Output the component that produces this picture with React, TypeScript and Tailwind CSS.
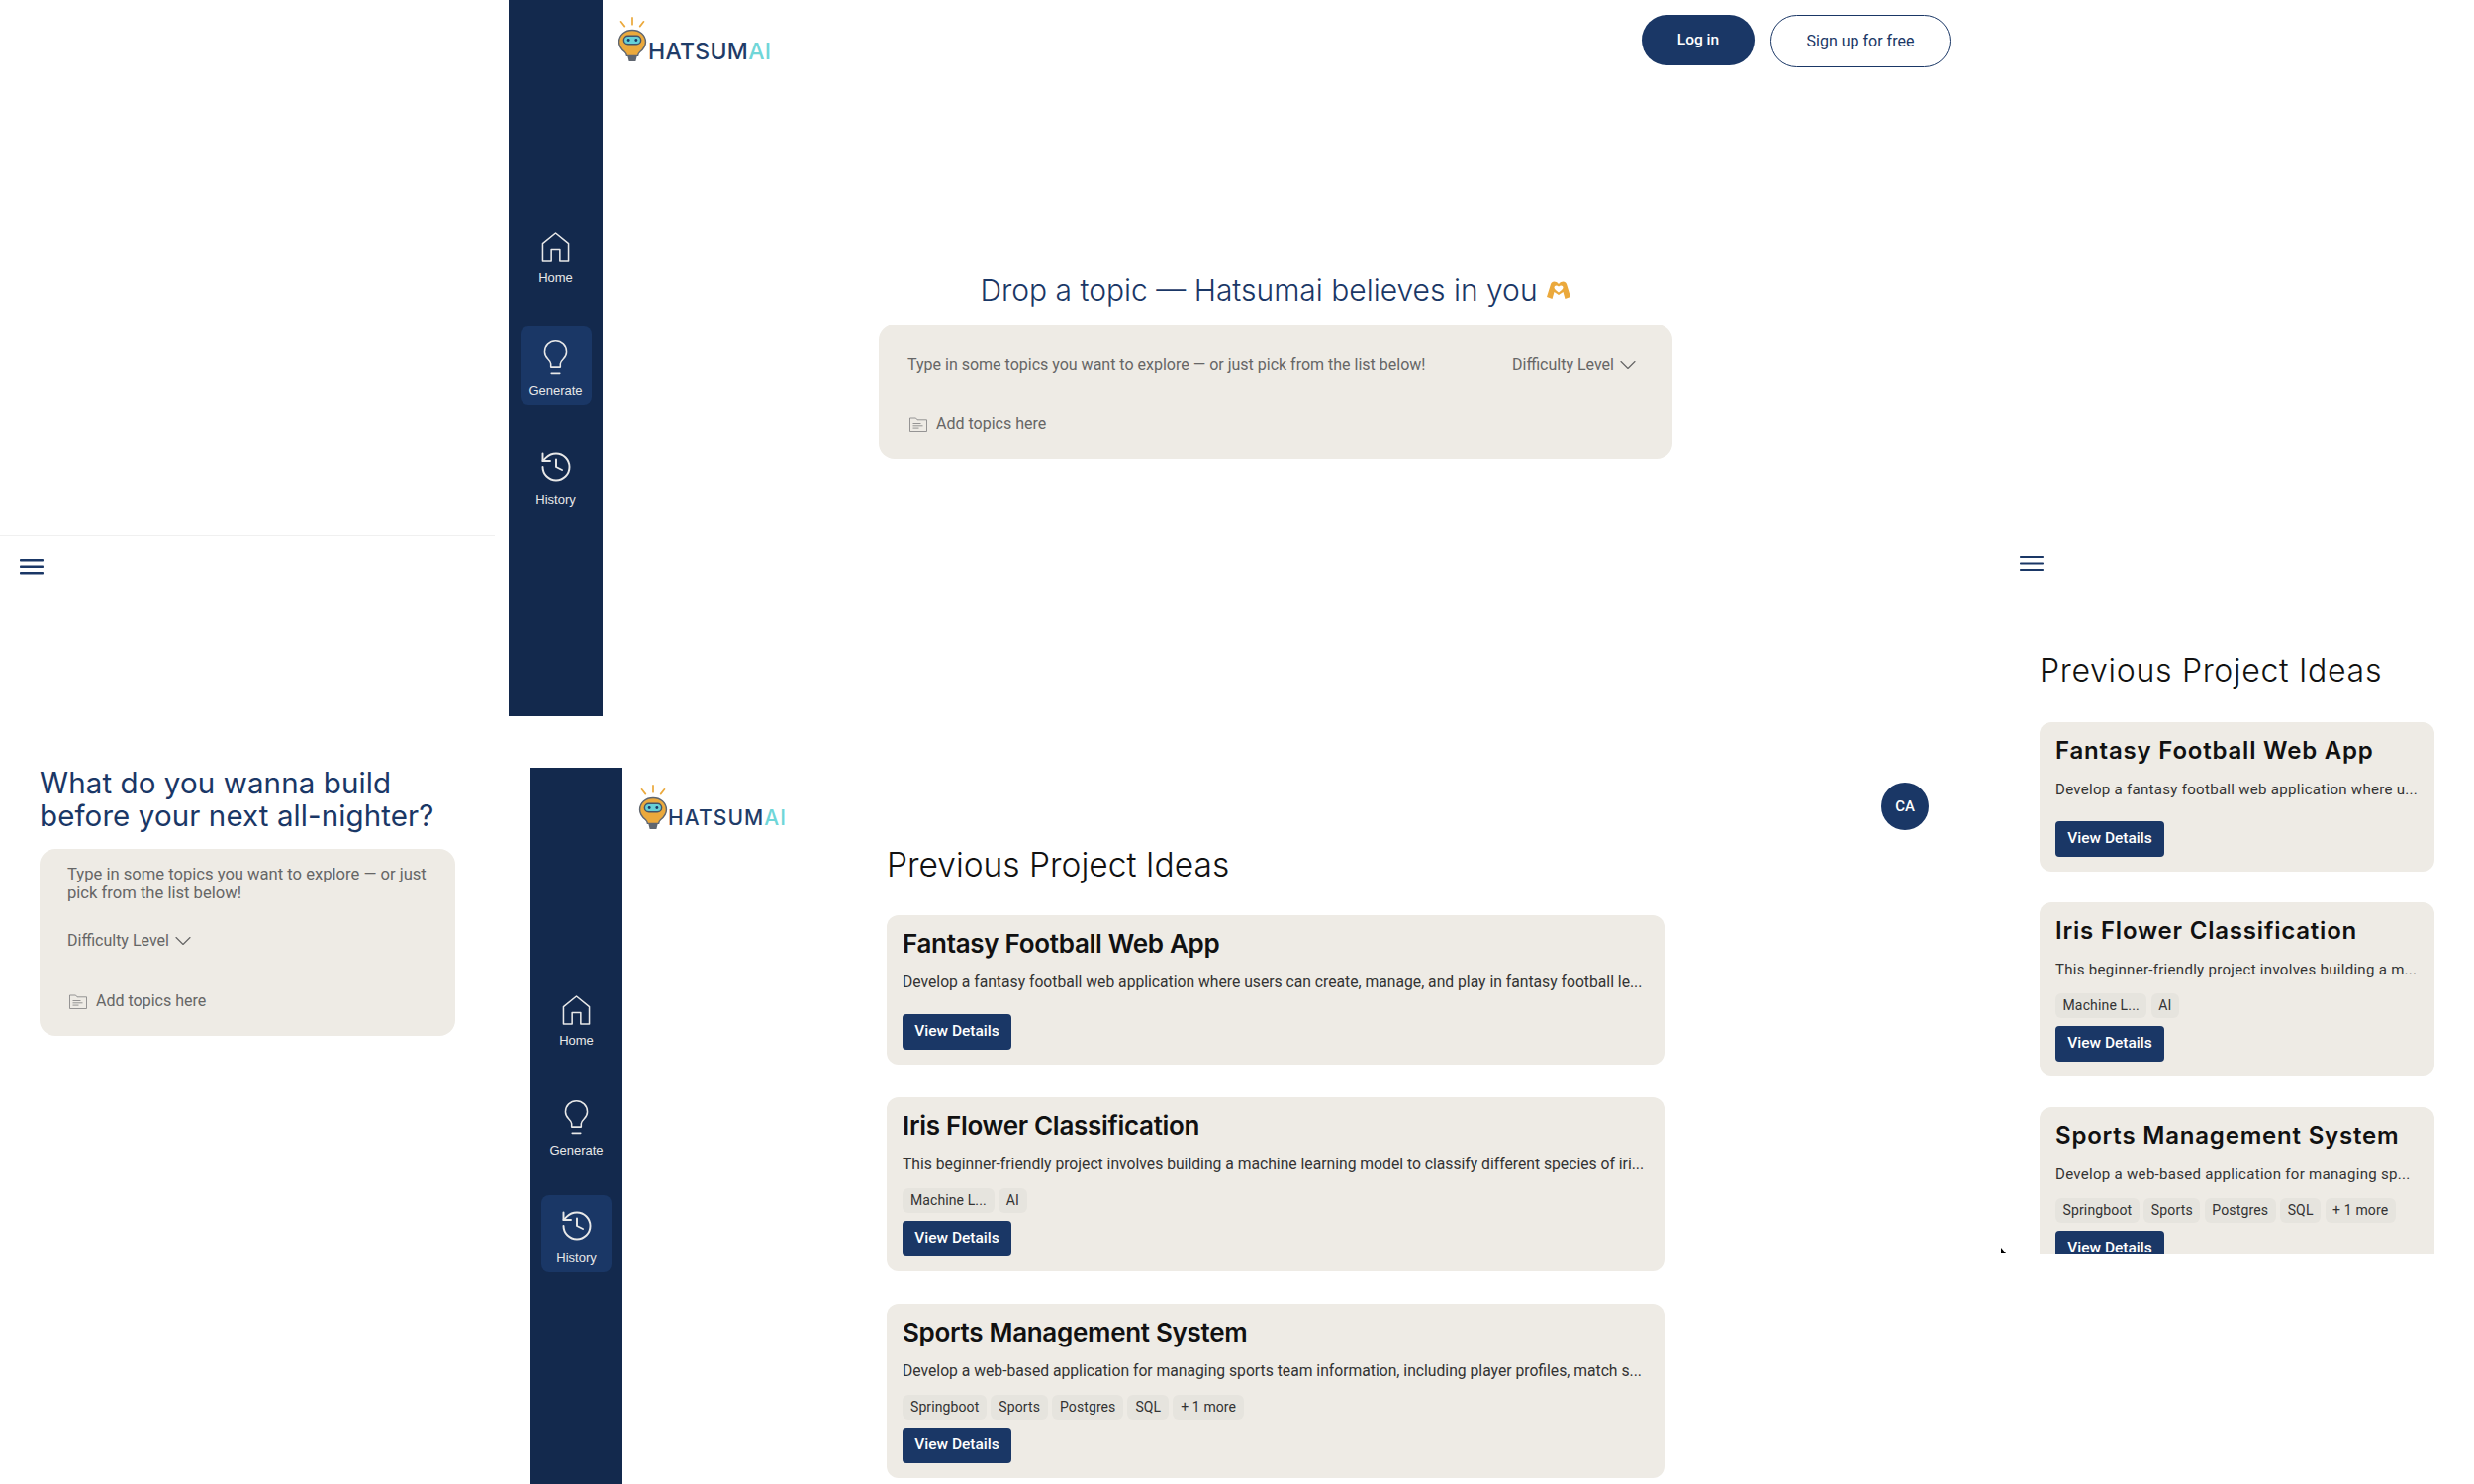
import { ChevronDown, History } from 'lucide-react';

function HomeIcon({ className }: { className?: string }) {
  return (
    <svg viewBox="0 0 30 32" fill="none" stroke="currentColor" strokeWidth="1.6" className={className}>
      <path d="M1.500 30.500V12.500L15 1.500l13.500 11v18h-9V18.500h-9V30.500z" strokeLinejoin="round" />
    </svg>
  );
}

function BulbIcon({ className }: { className?: string }) {
  return (
    <svg viewBox="0 0 26 38" fill="none" stroke="currentColor" strokeWidth="1.6" className={className}>
      <path d="M8 29v-3.500c0-2-1-3-3-5C2.800 18.300 1.500 16 1.500 13a11.500 11.500 0 0 1 23 0c0 3-1.300 5.300-3.500 7.500-2 2-3 3-3 5V29z" strokeLinejoin="round" />
      <path d="M8.500 35.500h9" strokeLinecap="round" />
    </svg>
  );
}

function FolderIcon({ className }: { className?: string }) {
  return (
    <svg viewBox="0 0 18 15" fill="none" stroke="currentColor" strokeWidth="0.9" className={className}>
      <path d="M.5 14.500V1h6l1.500 1.800h9.500v11.700z" strokeLinejoin="round" />
      <path d="M3.500 6.500h8M3.500 8.800h10M3.500 11.100h6" />
    </svg>
  );
}

function MenuIcon({ className, thin }: { className?: string; thin?: boolean }) {
  const bar = thin ? 2 : 2.6;
  return (
    <svg viewBox="0 0 24 16" fill="currentColor" className={className}>
      <rect x="0" y="0" width="24" height={bar} rx="0.8" />
      <rect x="0" y="6.500" width="24" height={bar} rx="0.8" />
      <rect x="0" y="13" width="24" height={bar} rx="0.8" />
    </svg>
  );
}

function HeartHands({ className }: { className?: string }) {
  return (
    <svg viewBox="0 0 26 20" className={className}>
      <path d="M1 17 5 4c1-3 5-3.500 8 0 3-3.500 7-3 8 0l4 13-5.500 2-2-7L13 15l-4.500-3-2 7z" fill="#eba93c" />
      <path d="M13 6.500c-2-2-4.500-1-4.500 1 0 1.500 2.500 3.500 4.500 5 2-1.500 4.500-3.500 4.500-5 0-2-2.500-3-4.500-1z" fill="#fff" />
    </svg>
  );
}

function Logo({ compact }: { compact?: boolean }) {
  return (
    <div className="flex items-end w-[155px] h-[50px]">
      <svg viewBox="0 0 30 50" className="w-[30px] h-[48px] shrink-0">
        <path d="M15 1v7M3 5l4 5M27 5l-4 5" stroke="#eba93c" strokeWidth="1.800" strokeLinecap="round" />
        <path
          d="M15 14c-7.500 0-14 5-14 12.500 0 5 3 8 6 10.500 1.500 1.200 2 2.500 2.200 4h11.600c.2-1.500.7-2.800 2.200-4 3-2.500 6-5.500 6-10.500C29 19 22.500 14 15 14z"
          fill="#eba93c"
          stroke="#5f6670"
          strokeWidth="1.500"
        />
        <path d="M10 41h10l-1.500 6h-7z" fill="#5f6670" />
        <rect x="6" y="20" width="18" height="9" rx="4.500" fill="#67d0d6" stroke="#43546a" strokeWidth="1.500" />
        <circle cx="11" cy="24.500" r="1.500" fill="#1a3766" />
        <circle cx="19" cy="24.500" r="1.500" fill="#1a3766" />
      </svg>
      <span
        className={
          compact
            ? "mb-[1px] font-['Inter',sans-serif] text-[21px] leading-[26px] font-medium tracking-[1.1px] text-[#1f3c68] whitespace-nowrap"
            : "ml-[1px] font-['Inter',sans-serif] text-[23px] leading-[26px] font-medium tracking-[0.3px] text-[#1f3c68] whitespace-nowrap"
        }
      >
        HATSUM<span className="text-[#6fd6d8]">AI</span>
      </span>
    </div>
  );
}

function NavItem({ label, active, compact, children }: { label: string; active?: boolean; compact?: boolean; children: React.ReactNode }) {
  return (
    <div
      className={`flex flex-col items-center justify-center gap-[7px] pt-[5px] rounded-lg text-[#e8e8e8] font-['Liberation_Sans',sans-serif] text-[13px] leading-[15px] ${
        compact ? 'w-[71px] h-[78px]' : 'w-[72px] h-[79px]'
      } ${active ? 'bg-[#1a3766]' : ''}`}
    >
      {children}
      <span>{label}</span>
    </div>
  );
}

function Sidebar({ active, compact }: { active: string; compact?: boolean }) {
  return (
    <aside
      className={`shrink-0 h-full bg-[#13294d] flex flex-col items-center ${
        compact ? 'w-[93px] pt-[214px] gap-[31px]' : 'w-[95px] pt-[219px] gap-[32px]'
      }`}
    >
      <NavItem label="Home" active={active === 'Home'} compact={compact}>
        <HomeIcon className="w-[29px] h-[32px]" />
      </NavItem>
      <NavItem label="Generate" active={active === 'Generate'} compact={compact}>
        <BulbIcon className="w-[25px] h-[37px]" />
      </NavItem>
      <NavItem label="History" active={active === 'History'} compact={compact}>
        <History className="w-[36px] h-[36px]" strokeWidth={1.300} />
      </NavItem>
    </aside>
  );
}

function Chip({ children, wide }: { children: React.ReactNode; wide?: boolean }) {
  return (
    <span
      className={
        wide
          ? 'px-[7.500px] h-[25px] flex items-center rounded-md bg-[#e6e4de] text-[14px] tracking-[0.15px] text-[#333] whitespace-nowrap'
          : 'px-[8px] h-[25px] flex items-center rounded-md bg-[#e6e4de] text-[14px] tracking-[0.1px] text-[#333] whitespace-nowrap'
      }
    >
      {children}
    </span>
  );
}

type Project = { title: string; wide: string; narrow: string; chips: string[] };

const projects: Project[] = [
  {
    title: 'Fantasy Football Web App',
    wide: 'Develop a fantasy football web application where users can create, manage, and play in fantasy football le...',
    narrow: 'Develop a fantasy football web application where u...',
    chips: [],
  },
  {
    title: 'Iris Flower Classification',
    wide: 'This beginner-friendly project involves building a machine learning model to classify different species of iri...',
    narrow: 'This beginner-friendly project involves building a m...',
    chips: ['Machine L...', 'AI'],
  },
  {
    title: 'Sports Management System',
    wide: 'Develop a web-based application for managing sports team information, including player profiles, match s...',
    narrow: 'Develop a web-based application for managing sp...',
    chips: ['Springboot', 'Sports', 'Postgres', 'SQL', '+ 1 more'],
  },
];

function ProjectCard({ project, wide }: { project: Project; wide?: boolean }) {
  const hasChips = project.chips.length > 0;
  return (
    <div
      className={`rounded-xl bg-[#eeebe5] font-['Roboto',sans-serif] px-[16px] pt-[14px] pb-[15px] ${
        wide ? 'w-[399px]' : 'w-[786px]'
      }`}
    >
      <h3
        className={
          wide
            ? "font-['Inter',sans-serif] text-[24px] leading-[30px] font-semibold tracking-[0.8px] text-[#111] whitespace-nowrap"
            : "font-['Inter',sans-serif] text-[26px] leading-[30px] font-semibold tracking-[-0.3px] text-[#111] whitespace-nowrap"
        }
      >
        {project.title}
      </h3>
      <p
        className={
          wide
            ? 'mt-[14px] text-[15px] leading-[20px] tracking-[0.3px] text-[#333] whitespace-nowrap'
            : 'mt-[14px] text-[15.700px] leading-[20px] text-[#333] whitespace-nowrap'
        }
      >
        {wide ? project.narrow : project.wide}
      </p>
      {hasChips ? (
        <div className={wide ? 'mt-[14px] flex gap-[4.500px]' : 'mt-[14px] flex gap-[4px]'}>
          {project.chips.map((c) => (
            <Chip key={c} wide={wide}>
              {c}
            </Chip>
          ))}
        </div>
      ) : (
        <div className="h-[14px]" />
      )}
      <button
        type="button"
        className="mt-[8px] block w-[110px] h-[36px] rounded bg-[#1a3766] text-white text-[15.500px] font-medium"
      >
        View Details
      </button>
    </div>
  );
}

function PromptFooter() {
  return (
    <div className="ml-[2px] flex items-center gap-[9px] text-[16px] text-[#666]">
      <FolderIcon className="w-[18px] h-[15px] text-[#8a8a8a]" />
      <span>Add topics here</span>
    </div>
  );
}

function Difficulty() {
  return (
    <div className="flex items-center text-[16px] text-[#666] whitespace-nowrap">
      <span>Difficulty Level</span>
      <ChevronDown className="w-[28px] h-[28px] -my-[2px]" strokeWidth={1} />
    </div>
  );
}

export default function App() {
  return (
    <div className="relative w-[2500px] h-[1500px] bg-white overflow-hidden font-['Roboto',sans-serif]">
      {/* desktop, logged out */}
      <section className="absolute left-[514px] top-0 w-[1457px] h-[724px] flex">
        <Sidebar active="Generate" />
        <div className="flex-1 min-w-0">
          <header className="h-[68px] pl-[15px] pt-[15px] flex items-start justify-between">
            <Logo />
            <div className="flex gap-[16px]">
              <button type="button" className="w-[114px] h-[51px] rounded-full bg-[#1a3766] text-white text-[15.500px] font-medium">
                Log in
              </button>
              <button
                type="button"
                className="w-[182px] h-[53px] rounded-full border border-[#1a3766] text-[#1a3766] text-[16px]"
              >
                Sign up for free
              </button>
            </div>
          </header>
          <div className="ml-[279px] mt-[207px] w-[802px]">
            <h2 className="h-[36px] flex items-center justify-center gap-[8px] font-['Inter',sans-serif] text-[30px] font-light text-[#1a3766] whitespace-nowrap">
              Drop a topic — Hatsumai believes in you
              <HeartHands className="w-[26px] h-[20px]" />
            </h2>
            <div className="mt-[17px] h-[136px] rounded-2xl bg-[#eeebe5] pl-[29px] pr-[31px] pt-[29px]">
              <div className="flex items-center justify-between h-[24px]">
                <span className="text-[16px] text-[#666] whitespace-nowrap">
                  Type in some topics you want to explore — or just pick from the list below!
                </span>
                <Difficulty />
              </div>
              <div className="mt-[36px]">
                <PromptFooter />
              </div>
            </div>
          </div>
        </div>
      </section>

      {/* mobile, prompt */}
      <section className="absolute left-0 top-[541px] w-[500px] h-[520px] border-t border-[#f0f0f0]">
        <div className="pl-[20px] pt-[23px]">
          <MenuIcon className="w-[24px] h-[16px] text-[#1a3766]" />
        </div>
        <div className="pl-[40px] pt-[194px]">
          <h2 className="font-['Inter',sans-serif] text-[29.500px] leading-[33px] tracking-[0.1px] text-[#1a3766] whitespace-nowrap">
            What do you wanna build
            <br />
            before your next all-nighter?
          </h2>
          <div className="mt-[17px] w-[420px] h-[189px] rounded-2xl bg-[#eeebe5] pl-[28px] pr-[20px] pt-[16px]">
            <p className="text-[16.600px] leading-[19px] text-[#666]">
              Type in some topics you want to explore — or just pick from the list below!
            </p>
            <div className="mt-[27px]">
              <Difficulty />
            </div>
            <div className="mt-[37px]">
              <PromptFooter />
            </div>
          </div>
        </div>
      </section>

      {/* desktop, logged in */}
      <section className="absolute left-[536px] top-[776px] w-[1413px] h-[724px] flex">
        <Sidebar active="History" compact />
        <div className="flex-1 min-w-0">
          <header className="h-[65px] pl-[16px] pt-[15px] flex items-start justify-between">
            <Logo compact />
            <div className="w-[48px] h-[48px] rounded-full bg-[#1a3766] flex items-center justify-center text-white text-[15px] font-medium">
              CA
            </div>
          </header>
          <div className="ml-[267px] mt-[15px] w-[786px]">
            <h2 className="h-[36px] flex items-center font-['Inter',sans-serif] text-[33.500px] font-light text-[#111] whitespace-nowrap">
              Previous Project Ideas
            </h2>
            <div className="mt-[33px] flex flex-col gap-[33px]">
              {projects.map((p) => (
                <ProjectCard key={p.title} project={p} />
              ))}
            </div>
          </div>
        </div>
      </section>

      {/* mobile, history */}
      <section className="absolute left-[2020px] top-[540px] w-[480px] h-[728px] overflow-hidden">
        <div className="pl-[21px] pt-[22px]">
          <MenuIcon thin className="w-[24px] h-[16px] text-[#1a3766]" />
        </div>
        <div className="pl-[41px] pt-[82px]">
          <h2 className="h-[36px] flex items-center font-['Inter',sans-serif] text-[32px] font-light tracking-[0.7px] text-[#111] whitespace-nowrap">
            Previous Project Ideas
          </h2>
          <div className="mt-[34px] flex flex-col gap-[31px]">
            {projects.map((p) => (
              <ProjectCard key={p.title} project={p} wide />
            ))}
          </div>
        </div>
        {/* stray pointer tip left in the capture */}
        <div className="absolute left-[2px] bottom-[1px] w-0 h-0 border-l-[5px] border-l-black border-t-[6px] border-t-transparent" />
      </section>
    </div>
  );
}
